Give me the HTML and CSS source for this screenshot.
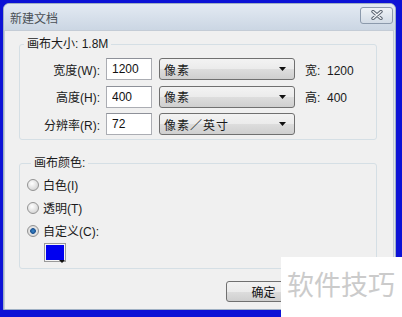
FILE: index.html
```html
<!DOCTYPE html>
<html lang="zh-CN">
<head>
  <meta charset="UTF-8" />
  <title>新建文档</title>
  <link rel="stylesheet" href="styles.css">
</head>
<body>
  <div class="window">
    <div class="titlebar">
      <span class="title">新建文档</span>
      <button class="close" aria-label="关闭">
        <svg width="14" height="10" viewBox="0 0 14 10">
          <path d="M3 1.5 L11 8.5 M11 1.5 L3 8.5" stroke="#5a6470" stroke-width="3.4" stroke-linecap="round"/>
          <path d="M3 1.5 L11 8.5 M11 1.5 L3 8.5" stroke="#f4f6f8" stroke-width="1.4" stroke-linecap="round"/>
        </svg>
      </button>
    </div>

    <div class="content">
      <!-- Canvas size -->
      <fieldset class="group">
        <legend>画布大小: 1.8M</legend>
        <div class="size-grid">
          <label class="lbl">宽度(W):</label>
          <input class="field" type="text" value="1200">
          <div class="combo"><span>像素</span><svg width="8" height="4" viewBox="0 0 8 4"><path d="M0 0 H7 L3.5 4 Z" fill="#111"/></svg></div>
          <span class="info">宽:&nbsp; 1200</span>

          <label class="lbl">高度(H):</label>
          <input class="field" type="text" value="400">
          <div class="combo"><span>像素</span><svg width="8" height="4" viewBox="0 0 8 4"><path d="M0 0 H7 L3.5 4 Z" fill="#111"/></svg></div>
          <span class="info">高:&nbsp; 400</span>

          <label class="lbl">分辨率(R):</label>
          <input class="field" type="text" value="72">
          <div class="combo"><span>像素／英寸</span><svg width="8" height="4" viewBox="0 0 8 4"><path d="M0 0 H7 L3.5 4 Z" fill="#111"/></svg></div>
          <span class="info"></span>
        </div>
      </fieldset>

      <!-- Canvas color -->
      <fieldset class="group colors">
        <legend>画布颜色:</legend>
        <label class="radio"><span class="dot"></span>白色(I)</label>
        <label class="radio"><span class="dot"></span>透明(T)</label>
        <label class="radio"><span class="dot checked"></span>自定义(C):</label>
        <div class="swatch"><span class="fill"></span><span class="drop"></span></div>
      </fieldset>

      <div class="actions">
        <button class="btn">确定</button>
      </div>
    </div>
  </div>

  <div class="watermark">软件技巧</div>
</body>
</html>
```

FILE: styles.css
```css
body {
  margin: 0;
  width: 402px;
  height: 317px;
  overflow: hidden;
  background: #0c12d6;
  font-family: "Liberation Sans", "Noto Sans CJK SC", sans-serif;
  font-size: 12px;
  color: #1a1a1a;
  position: relative;
}

.window {
  margin: 3px 0 0 3px;
  width: 393px;
  height: 307px;
  background: #dde4ec;
  border: 1px solid #9fb0c4;
  border-radius: 6px 6px 0 0;
  box-sizing: border-box;
  display: flex;
  flex-direction: column;
}

.titlebar {
  height: 26px;
  display: flex;
  align-items: center;
  justify-content: space-between;
  padding: 0 2px 0 6px;
  background: linear-gradient(#e3eaf3, #cbd6e3);
  border-radius: 5px 5px 0 0;
}

.title {
  color: #4a4f55;
  font-size: 12px;
}

.close {
  width: 33px;
  height: 17px;
  margin-top: -4px;
  padding: 0;
  border: 1px solid #8c9aac;
  border-radius: 3px;
  background: linear-gradient(#eef2f6, #d3dce6);
  display: flex;
  align-items: center;
  justify-content: center;
}

.content {
  flex: 1;
  background: #f0f0f0;
  margin: 0 1px 0 0;
  border: 1px solid #c4ccd6;
  border-bottom: none;
  padding: 6px 16px 0 14px;
  display: flex;
  flex-direction: column;
}

.group {
  margin: 0;
  padding: 0;
  border: 1px solid #d5dfe5;
  border-radius: 3px;
}

.group legend {
  margin-left: 4px;
  padding: 0 3px;
  line-height: 14px;
}

.size-grid {
  display: grid;
  grid-template-columns: 80px 46px 137px auto;
  grid-auto-rows: 22px;
  column-gap: 6px;
  row-gap: 5.5px;
  align-items: center;
  padding: 7px 0 4px;
}

.lbl {
  text-align: right;
}

.field {
  height: 22px;
  box-sizing: border-box;
  border: 1px solid #abadb3;
  border-top-color: #8e9199;
  background: #fff;
  padding: 0 5px;
  font: inherit;
  color: #111;
}

.combo {
  height: 22px;
  margin-left: 1px;
  box-sizing: border-box;
  border: 1px solid #707070;
  border-radius: 3px;
  background: linear-gradient(#f3f3f3 0%, #ebebeb 50%, #dddddd 51%, #cfcfcf 100%);
  display: flex;
  align-items: center;
  justify-content: space-between;
  padding: 0 7px 0 4px;
}

.combo span {
  letter-spacing: 1px;
}

.info {
  padding-left: 4px;
}

.colors {
  margin-top: 16px;
  padding: 3px 0 6px 7px;
}

.radio {
  height: 23px;
  display: flex;
  align-items: center;
  gap: 4px;
}

.dot {
  width: 12px;
  height: 12px;
  box-sizing: border-box;
  border-radius: 50%;
  border: 1px solid #939393;
  background: radial-gradient(circle at 40% 35%, #ffffff, #d9d9d9 70%, #c4c4c4);
}

.dot.checked {
  background: radial-gradient(circle, #3a8ad0 0, #1d5391 2.5px, #e6e6e6 3.2px, #cfcfcf 100%);
}

.swatch {
  position: relative;
  width: 22px;
  height: 19px;
  margin: 1px 0 0 17px;
  box-sizing: border-box;
  border: 1px solid #9a9a9a;
  background: #f4f4f4;
  padding: 1px;
}

.swatch .fill {
  display: block;
  height: 100%;
  background: #0000f0;
}

.swatch .drop {
  position: absolute;
  right: 0;
  bottom: -2px;
  width: 0;
  height: 0;
  border-left: 3px solid transparent;
  border-right: 3px solid transparent;
  border-top: 3px solid #111;
}

.actions {
  display: flex;
  margin-top: 12px;
  padding-left: 207px;
}

.btn {
  width: 75px;
  height: 21px;
  border: 1px solid #707070;
  border-radius: 3px;
  background: linear-gradient(#f2f2f2 0%, #ebebeb 50%, #dddddd 51%, #cfcfcf 100%);
  font: inherit;
  color: #111;
  padding: 0;
}

.watermark {
  position: absolute;
  left: 281px;
  top: 257px;
  width: 121px;
  height: 60px;
  background: #fff;
  color: #cbcbcb;
  font-family: "Noto Sans CJK SC", sans-serif;
  font-size: 27px;
  line-height: 54px;
  padding-left: 6px;
  box-sizing: border-box;
  white-space: nowrap;
}
```
